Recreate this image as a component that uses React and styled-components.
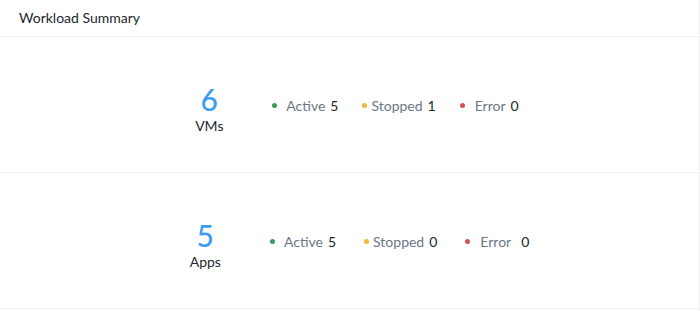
import React from "react";
import styled, { createGlobalStyle } from "styled-components";

const GlobalStyle = createGlobalStyle`
    body {
        margin: 0;
        background: #ffffff;
        font-family: "Lato", "Open Sans", sans-serif;
        color: #22272e;
    }
`;

const workloads = [
    {
        count: 6,
        label: "VMs",
        layout: { inset: 14, split: 48, spread: 24 },
        stats: [
            { name: "Active", value: 5, color: "#3a9a5b", gap: 9 },
            { name: "Stopped", value: 1, color: "#f6b73c", gap: 4 },
            { name: "Error", value: 0, color: "#d2534f", gap: 10 },
        ],
    },
    {
        count: 5,
        label: "Apps",
        layout: { inset: 20, split: 49, spread: 28 },
        stats: [
            { name: "Active", value: 5, color: "#3a9a5b", gap: 9 },
            { name: "Stopped", value: 0, color: "#f6b73c", gap: 4 },
            { name: "Error", value: 0, color: "#d2534f", gap: 10, wide: true },
        ],
    },
];

const App = () => {
    return (
        <Card>
            <GlobalStyle />
            <Header>Workload Summary</Header>
            {workloads.map((w) => (
                <Section key={w.label} inset={w.layout.inset} split={w.layout.split}>
                    <Total>
                        <BigNumber>{w.count}</BigNumber>
                        <TotalLabel>{w.label}</TotalLabel>
                    </Total>
                    <StatList spread={w.layout.spread}>
                        {w.stats.map((s) => (
                            <Stat key={s.name}>
                                <Dot color={s.color} gap={s.gap} />
                                <StatName>{s.name}</StatName>
                                <StatValue wide={s.wide}>{s.value}</StatValue>
                            </Stat>
                        ))}
                    </StatList>
                </Section>
            ))}
        </Card>
    );
};

const Card = styled.div`
    width: 700px;
    height: 311px;
    box-sizing: border-box;
    border-right: 1px solid #f0f1f3;
    display: flex;
    flex-direction: column;
`;

const Header = styled.div`
    height: 37px;
    box-sizing: border-box;
    padding: 9px 19px 0;
    font-size: 14px;
    color: #22272e;
    border-bottom: 1px solid #eef0f2;
`;

const Section = styled.div`
    height: 136px;
    box-sizing: border-box;
    border-bottom: 1px solid #eef0f2;
    display: flex;
    align-items: center;
    justify-content: center;
    gap: ${(props) => props.split}px;
    padding: 5px 0 0 ${(props) => props.inset}px;
`;

const Total = styled.div`
    display: flex;
    flex-direction: column;
    align-items: center;
    min-width: 30px;
`;

const BigNumber = styled.div`
    font-size: 30px;
    line-height: 36px;
    font-weight: 500;
    color: #3b9df2;
`;

const TotalLabel = styled.div`
    font-size: 14px;
    line-height: 17px;
    color: #22272e;
`;

const StatList = styled.div`
    display: flex;
    align-items: center;
    gap: ${(props) => props.spread}px;
    margin-top: -3px;
`;

const Stat = styled.div`
    display: flex;
    align-items: center;
    font-size: 14px;
`;

const Dot = styled.span`
    width: 5px;
    height: 5px;
    border-radius: 50%;
    background: ${(props) => props.color};
    margin-right: ${(props) => props.gap}px;
`;

const StatName = styled.span`
    color: #6b7786;
`;

const StatValue = styled.span`
    color: #22272e;
    margin-left: ${(props) => (props.wide ? 10 : 5)}px;
`;

export default App;
